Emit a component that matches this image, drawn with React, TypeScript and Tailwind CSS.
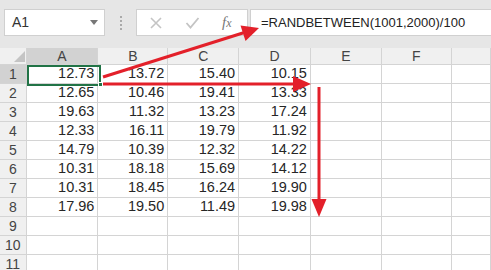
import React from "react";

const cols = [
  { name: "A", w: 73 },
  { name: "B", w: 71 },
  { name: "C", w: 72 },
  { name: "D", w: 73 },
  { name: "E", w: 72 },
  { name: "F", w: 71 },
  { name: "", w: 40 },
];

const data = [
  ["12.73", "13.72", "15.40", "10.15"],
  ["12.65", "10.46", "19.41", "13.33"],
  ["19.63", "11.32", "13.23", "17.24"],
  ["12.33", "16.11", "19.79", "11.92"],
  ["14.79", "10.39", "12.32", "14.22"],
  ["10.31", "18.18", "15.69", "14.12"],
  ["10.31", "18.45", "16.24", "19.90"],
  ["17.96", "19.50", "11.49", "19.98"],
];

function Arrows() {
  return (
    <svg className="absolute left-0 top-0 pointer-events-none" width={491} height={270}>
      <g fill="#e3202a" stroke="#e3202a">
        <line x1={103} y1={77} x2={246} y2={32} strokeWidth={3} />
        <polygon points="259,28 245.5,41 240.5,25.5" stroke="none" />
        <line x1={103} y1={84} x2={296} y2={84} strokeWidth={3} />
        <polygon points="311,84 293,76 293,92" stroke="none" />
        <line x1={319} y1={87} x2={319} y2={202} strokeWidth={3} />
        <polygon points="319,217 311.5,199 326.5,199" stroke="none" />
      </g>
    </svg>
  );
}

export default function App() {
  return (
    <div
      className="relative w-[491px] h-[270px] overflow-hidden bg-white text-[#222]"
      style={{ fontFamily: "'Liberation Sans', Arial, sans-serif" }}
    >
      {/* formula bar */}
      <div className="h-[48px] bg-[#e6e6e6] flex items-start pt-[9px] pl-[4px]">
        <div className="w-[101px] h-[27px] bg-white border border-[#d0d0d0] flex items-center justify-between pl-[7px] pr-[6px]">
          <span className="text-[14px] text-[#333]">A1</span>
          <span className="w-0 h-0 border-l-[4px] border-r-[4px] border-t-[5px] border-l-transparent border-r-transparent border-t-[#777]" />
        </div>
        <div className="w-[31px] h-[27px] flex flex-col items-center justify-center gap-[2px]">
          <span className="w-[2px] h-[2px] bg-[#aaa]" />
          <span className="w-[2px] h-[2px] bg-[#aaa]" />
          <span className="w-[2px] h-[2px] bg-[#aaa]" />
          <span className="w-[2px] h-[2px] bg-[#aaa]" />
        </div>
        <div className="w-[112px] h-[27px] bg-white border border-[#d0d0d0] flex items-center pl-[12px]">
          <svg width={14} height={14} viewBox="0 0 14 14" className="mr-[22px]">
            <path d="M2 2 L12 12 M12 2 L2 12" stroke="#c4c4c4" strokeWidth={1.6} />
          </svg>
          <svg width={15} height={14} viewBox="0 0 15 14" className="mr-[22px]">
            <path d="M1.5 7 L5.5 11.5 L13.5 2" stroke="#c4c4c4" strokeWidth={1.8} fill="none" />
          </svg>
          <span
            className="text-[15px] italic text-[#777]"
            style={{ fontFamily: "'Liberation Serif', serif" }}
          >
            f<span className="text-[12px]">x</span>
          </span>
        </div>
        <div className="ml-[2px] flex-1 h-[27px] bg-white border border-[#d0d0d0] border-r-0 flex items-center pl-[10px]">
          <span className="text-[13px] text-[#222]">=RANDBETWEEN(1001,2000)/100</span>
        </div>
      </div>

      {/* header row */}
      <div className="h-[17px] flex bg-[#f0f0f0] border-b border-[#d4d4d4]">
        <div className="w-[27px] h-full relative border-r border-[#d4d4d4]">
          <svg className="absolute left-[14px] top-[3px]" width={11} height={11}>
            <polygon points="11,0 11,11 0,11" fill="#c4c4c4" />
          </svg>
        </div>
        {cols.map((c, i) => (
          <div
            key={i}
            className={`h-full flex items-center justify-center text-[14px] text-[#444] border-r border-[#d4d4d4] ${
              i === 0 ? "bg-[#d2d2d2]" : ""
            }`}
            style={{ width: c.w }}
          >
            {c.name}
          </div>
        ))}
      </div>

      {/* rows */}
      {Array.from({ length: 11 }).map((_, r) => (
        <div key={r} className="h-[19px] flex border-b border-[#d4d4d4]">
          <div
            className={`w-[27px] h-full flex items-center justify-center text-[14px] text-[#444] border-r border-[#d4d4d4] ${
              r === 0 ? "bg-[#d2d2d2]" : "bg-[#f0f0f0]"
            }`}
          >
            {r + 1}
          </div>
          {cols.map((c, i) => (
            <div
              key={i}
              className="h-full flex items-center justify-end pr-[3px] text-[14.5px] text-[#262626] border-r border-[#d4d4d4]"
              style={{ width: c.w }}
            >
              {data[r] && i < 4 ? data[r][i] : ""}
            </div>
          ))}
        </div>
      ))}

      {/* active cell */}
      <div className="absolute left-[27px] top-[65px] w-[74px] h-[21px] border-2 border-[#217346]" />
      <div className="absolute left-[98px] top-[82px] w-[5px] h-[5px] bg-[#217346] border border-white" />

      <Arrows />
    </div>
  );
}
